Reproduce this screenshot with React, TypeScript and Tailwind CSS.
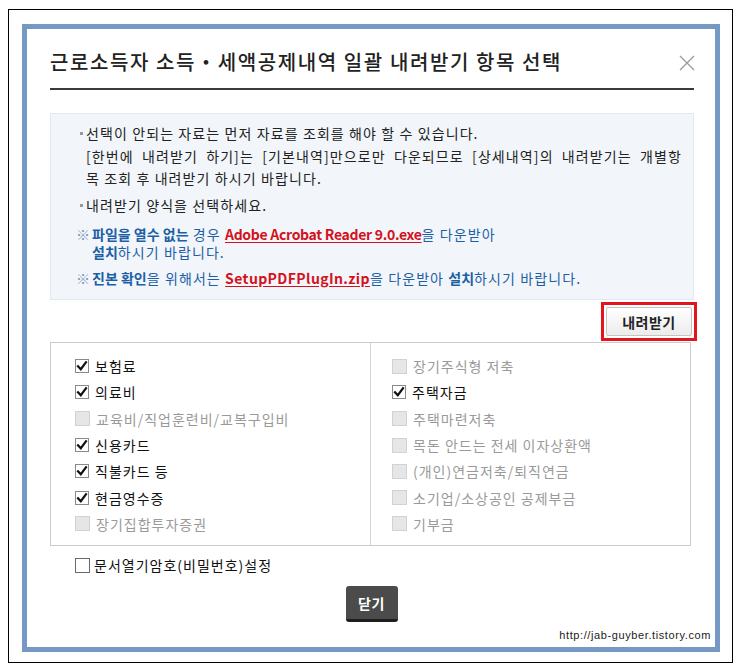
import React from "react";

const F = { fontFamily: '"Noto Sans CJK KR", "Noto Sans", sans-serif' };

function Checked() {
  return (
    <svg width="14" height="14" viewBox="0 0 14 14" className="shrink-0">
      <rect x="0.5" y="0.5" width="13" height="13" fill="#fff" stroke="#8a8a8a" />
      <path d="M3 7.2 L5.8 10.2 L11 3.2" fill="none" stroke="#111" strokeWidth="2.2" strokeLinecap="square" />
    </svg>
  );
}

function Disabled() {
  return <span className="block w-[15px] h-[15px] shrink-0 bg-[#e6e6e6] border border-[#d2d2d2]" />;
}

type Item = { label: string; checked?: boolean };

function Row({ item }: { item: Item }) {
  return (
    <div className="flex items-center h-[26.3px] gap-[6px]">
      {item.checked ? <Checked /> : <Disabled />}
      <span className={"text-[14px] leading-none tracking-[1px] " + (item.checked ? "text-[#111]" : "text-[#9a9a9a]")}>{item.label}</span>
    </div>
  );
}

const left: Item[] = [
  { label: "보험료", checked: true },
  { label: "의료비", checked: true },
  { label: "교육비/직업훈련비/교복구입비" },
  { label: "신용카드", checked: true },
  { label: "직불카드 등", checked: true },
  { label: "현금영수증", checked: true },
  { label: "장기집합투자증권" },
];

const right: Item[] = [
  { label: "장기주식형 저축" },
  { label: "주택자금", checked: true },
  { label: "주택마련저축" },
  { label: "목돈 안드는 전세 이자상환액" },
  { label: "(개인)연금저축/퇴직연금" },
  { label: "소기업/소상공인 공제부금" },
  { label: "기부금" },
];

export default function App() {
  return (
    <div className="w-[745px] h-[672px] bg-white pt-[9px] pl-[8px]" style={F}>
      <div className="w-[725px] h-[654px] border border-black pt-[14px] pl-[13px]">
        <div className="w-[698px] h-[628px] border-[5px] border-[#7598c5] bg-white flex flex-col">
          <div className="pl-[23px] pr-[21px] flex flex-col">
            {/* title */}
            <div className="flex items-center justify-between pt-[19px] h-[47px]">
              <h1 className="text-[20px] leading-[28px] text-[#222] font-medium tracking-[1.6px]">
                근로소득자 소득・세액공제내역 일괄 내려받기 항목 선택
              </h1>
              <svg width="18" height="18" viewBox="0 0 18 18" className="mr-[-2px] mt-[2px]">
                <path d="M2 2 L16 16 M16 2 L2 16" stroke="#9a9a9a" strokeWidth="1.3" />
              </svg>
            </div>
            <div className="mt-[12px] h-[2px] bg-[#3a3a3a]" />

            {/* info box */}
            <div className="mt-[23px] h-[187px] bg-[#f2f6fa] border border-[#e2e9f0] pl-[25px] pt-[8px] text-[14px] text-[#222] tracking-[1.1px]">
              <div className="flex leading-[22.5px]">
                <span className="w-[10px] shrink-0 flex justify-start pt-[10px] pl-[4px]">
                  <span className="block w-[3px] h-[3px] bg-[#999]" />
                </span>
                <div>
                  선택이 안되는 자료는 먼저 자료를 조회를 해야 할 수 있습니다.
                  <br />
                  <span className="[word-spacing:4px]">
                    [한번에 내려받기 하기]는 [기본내역]만으로만 다운되므로 [상세내역]의 내려받기는 개별항
                  </span>
                  <br />목 조회 후 내려받기 하시기 바랍니다.
                </div>
              </div>
              <div className="flex leading-[22.5px] mt-[4px]">
                <span className="w-[10px] shrink-0 flex justify-start pt-[10px] pl-[4px]">
                  <span className="block w-[3px] h-[3px] bg-[#999]" />
                </span>
                <div>내려받기 양식을 선택하세요.</div>
              </div>
              <div className="flex leading-[18px] mt-[9px] text-[#1d5fa6]">
                <span className="w-[16px] shrink-0 text-[#7d97b8] tracking-normal">※</span>
                <div>
                  <b className="tracking-normal">파일을 열수 없는</b> 경우{" "}
                  <a className="font-bold text-[#d3121e] underline underline-offset-2 tracking-[-0.3px]">Adobe Acrobat Reader 9.0.exe</a>을 다운받아
                  <br />
                  <b className="tracking-normal">설치</b>하시기 바랍니다.
                </div>
              </div>
              <div className="flex leading-[18px] mt-[8px] text-[#1d5fa6]">
                <span className="w-[16px] shrink-0 text-[#7d97b8] tracking-normal">※</span>
                <div>
                  <b className="tracking-normal">진본 확인</b>을 위해서는{" "}
                  <a className="font-bold text-[#d3121e] underline underline-offset-2 tracking-[0.4px]">SetupPDFPlugIn.zip</a>을 다운받아{" "}
                  <b className="tracking-normal">설치</b>하시기 바랍니다.
                </div>
              </div>
            </div>

            {/* download button */}
            <div className="flex justify-end mt-[2px] mr-[-3px]">
              <div className="w-[96px] h-[39px] border-[3px] border-[#e3141d] p-[2px]">
                <button className="w-full h-full border border-[#c4c4c4] rounded-[2px] bg-gradient-to-b from-white to-[#ececec] text-[14px] font-bold text-[#222] leading-none tracking-[0.5px]">
                  내려받기
                </button>
              </div>
            </div>

            {/* table */}
            <div className="mt-[1px] mr-[3px] h-[204px] border border-[#cccccc] grid grid-cols-[320px_1fr]">
              <div className="border-r border-[#d4d4d4] pl-[24px] pt-[10px]">
                {left.map((i) => (
                  <Row key={i.label} item={i} />
                ))}
              </div>
              <div className="pl-[21px] pt-[10px]">
                {right.map((i) => (
                  <Row key={i.label} item={i} />
                ))}
              </div>
            </div>

            {/* password */}
            <div className="mt-[9px] pl-[25px] h-[20px] flex items-center gap-[4px]">
              <span className="block w-[15px] h-[15px] border border-[#6a6a6a] bg-white" />
              <span className="text-[14px] text-[#111] leading-none tracking-[1px]">문서열기암호(비밀번호)설정</span>
            </div>

            {/* close */}
            <div className="flex justify-center mt-[11px] pr-[1px]">
              <button className="w-[52px] h-[36px] rounded-[3px] bg-[#4b4b4b] border-b-[3px] border-[#1e1e1e] text-white text-[14px] font-bold leading-none tracking-[0.5px]">
                닫기
              </button>
            </div>
          </div>
          <div className="flex justify-end pr-[4px] mt-[8px]">
            <span className="text-[11px] text-[#222] leading-none tracking-[0.6px]" style={{ fontFamily: '"Liberation Sans", sans-serif' }}>
              http://jab-guyber.tistory.com
            </span>
          </div>
        </div>
      </div>
    </div>
  );
}
